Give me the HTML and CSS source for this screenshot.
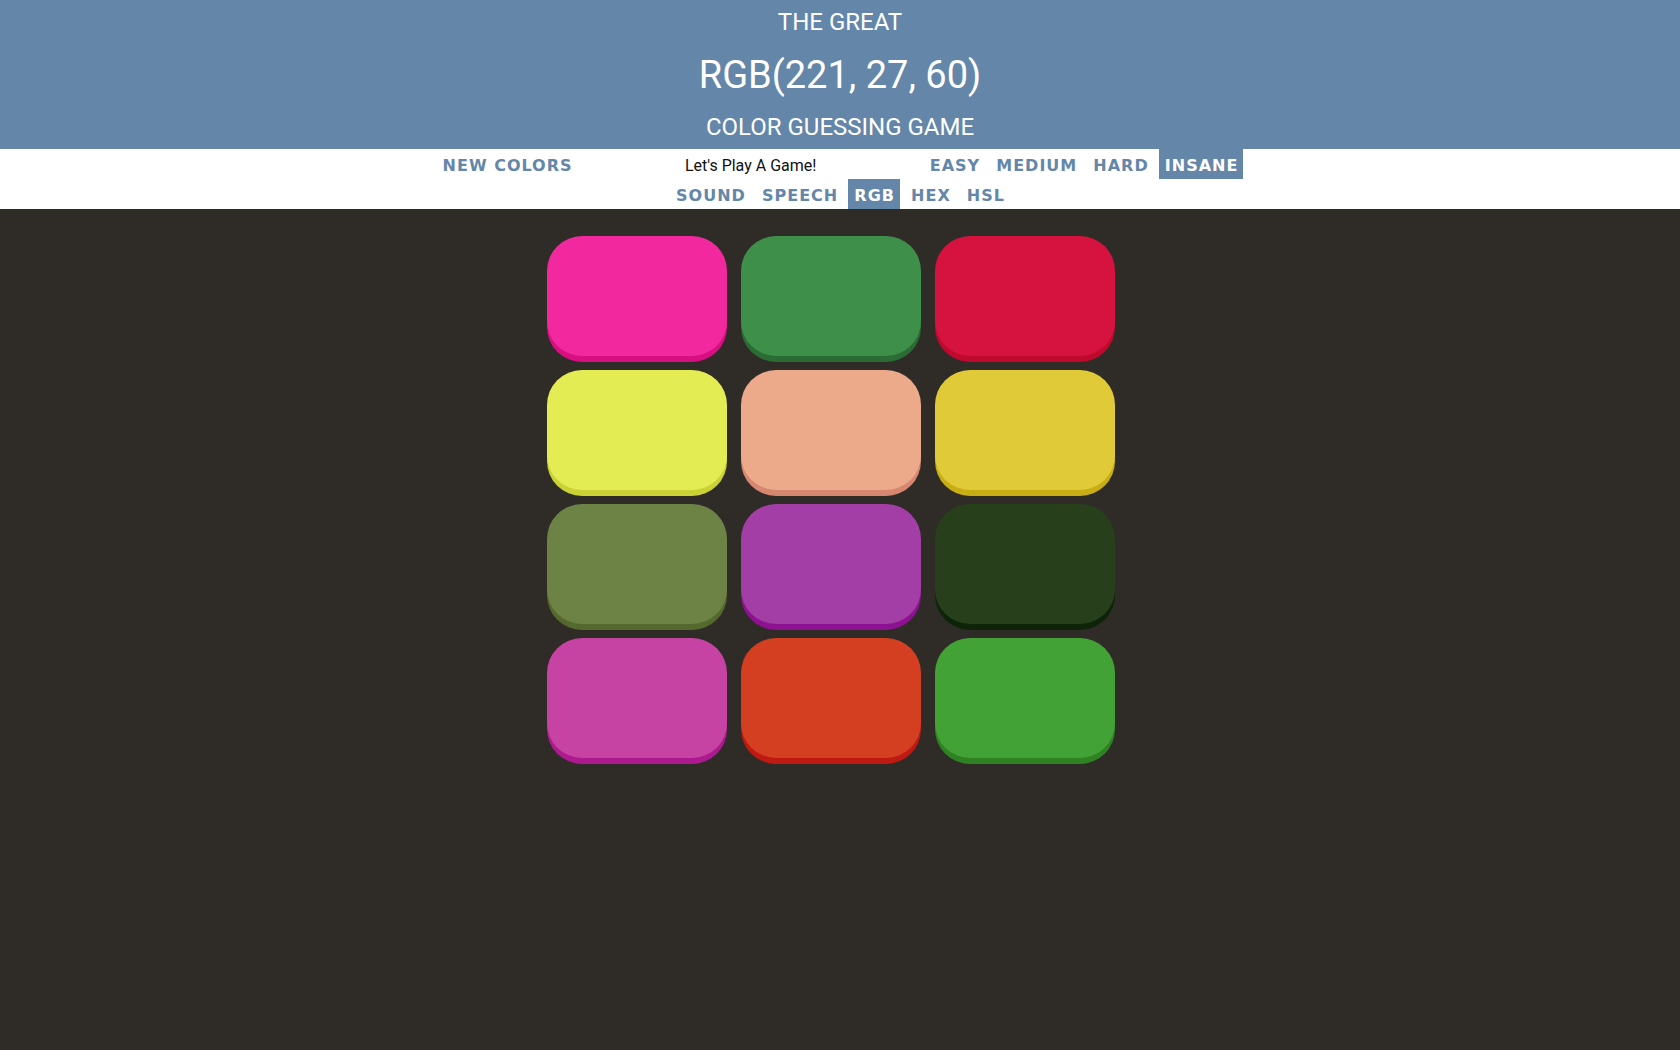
FILE: index.html
```html
<!DOCTYPE html>
<html lang="en">
<head>
<meta charset="utf-8">
<title>The Great RGB Color Guessing Game</title>
<link rel="stylesheet" href="styles.css">
</head>
<body>
<h1 class="title">
  <span class="title-line">The Great</span>
  <span class="title-color">RGB(221, 27, 60)</span>
  <span class="title-line title-last">Color Guessing Game</span>
</h1>
<div class="stripe">
  <div class="stripe-inner"><button class="btn">New Colors</button> <span class="message">Let's Play A Game!</span> <button class="btn">Easy</button> <button class="btn">Medium</button> <button class="btn">Hard</button> <button class="btn selected">Insane</button> <button class="btn">Sound</button> <button class="btn">Speech</button> <button class="btn selected">RGB</button> <button class="btn">Hex</button> <button class="btn">HSL</button></div>
</div>
<div class="board">
  <div class="square" style="--c:#f2289f;--s:#d80f80"></div>
  <div class="square" style="--c:#3d8f4a;--s:#2a6c33"></div>
  <div class="square" style="--c:#d6133e;--s:#bf0a2d"></div>
  <div class="square" style="--c:#e4ec53;--s:#cbd235"></div>
  <div class="square" style="--c:#ecaa8b;--s:#d5886f"></div>
  <div class="square" style="--c:#e0ca38;--s:#c8ad14"></div>
  <div class="square" style="--c:#6d8245;--s:#55682e"></div>
  <div class="square" style="--c:#a23ea6;--s:#8c1291"></div>
  <div class="square" style="--c:#27401b;--s:#0e2409"></div>
  <div class="square" style="--c:#c642a3;--s:#ad1a8f"></div>
  <div class="square" style="--c:#d43f21;--s:#bf1a12"></div>
  <div class="square" style="--c:#43a236;--s:#2e8224"></div>
</div>
</body>
</html>
```
FILE: styles.css
```css
html, body {
  margin: 0;
  padding: 0;
}

body {
  background: #2f2c28;
  font-family: Roboto, "Liberation Sans", sans-serif;
  min-height: 1050px;
}

.title {
  margin: 0;
  background: #6386a9;
  color: #ffffff;
  text-align: center;
  text-transform: uppercase;
  font-weight: normal;
  font-family: Roboto, sans-serif;
}

.title-line {
  display: block;
  font-size: 24px;
  line-height: 44px;
}

.title-last {
  line-height: 43px;
}

.title-color {
  display: block;
  font-size: 38px;
  line-height: 62px;
}

.stripe {
  background: #ffffff;
  height: 60px;
}

.stripe-inner {
  width: 840px;
  margin: 0 auto;
  text-align: center;
  font-family: "DejaVu Sans", sans-serif;
  font-size: 16px;
  line-height: 30px;
}

.btn {
  display: inline-block;
  vertical-align: top;
  box-sizing: border-box;
  height: 30px;
  margin: 0;
  padding: 2px 5px 0 6px;
  border: none;
  background: #ffffff;
  color: #6386a9;
  font-family: "DejaVu Sans", sans-serif;
  font-size: 16px;
  font-weight: 700;
  letter-spacing: 1px;
  text-transform: uppercase;
  line-height: 30px;
  outline: none;
  cursor: pointer;
}

.btn.selected {
  background: #6386a9;
  color: #ffffff;
}

.message {
  display: inline-block;
  vertical-align: top;
  width: 336px;
  height: 30px;
  overflow: hidden;
  text-align: center;
  font-family: Roboto, sans-serif;
  font-size: 16px;
  color: #111111;
  line-height: 34px;
}

.board {
  width: 600px;
  margin: 20px auto 0;
  display: flex;
  flex-wrap: wrap;
}

.square {
  width: 180px;
  height: 120px;
  margin: 7px;
  border-radius: 35px;
  background: var(--c);
  box-shadow: 0 6px 0 var(--s);
}
```
